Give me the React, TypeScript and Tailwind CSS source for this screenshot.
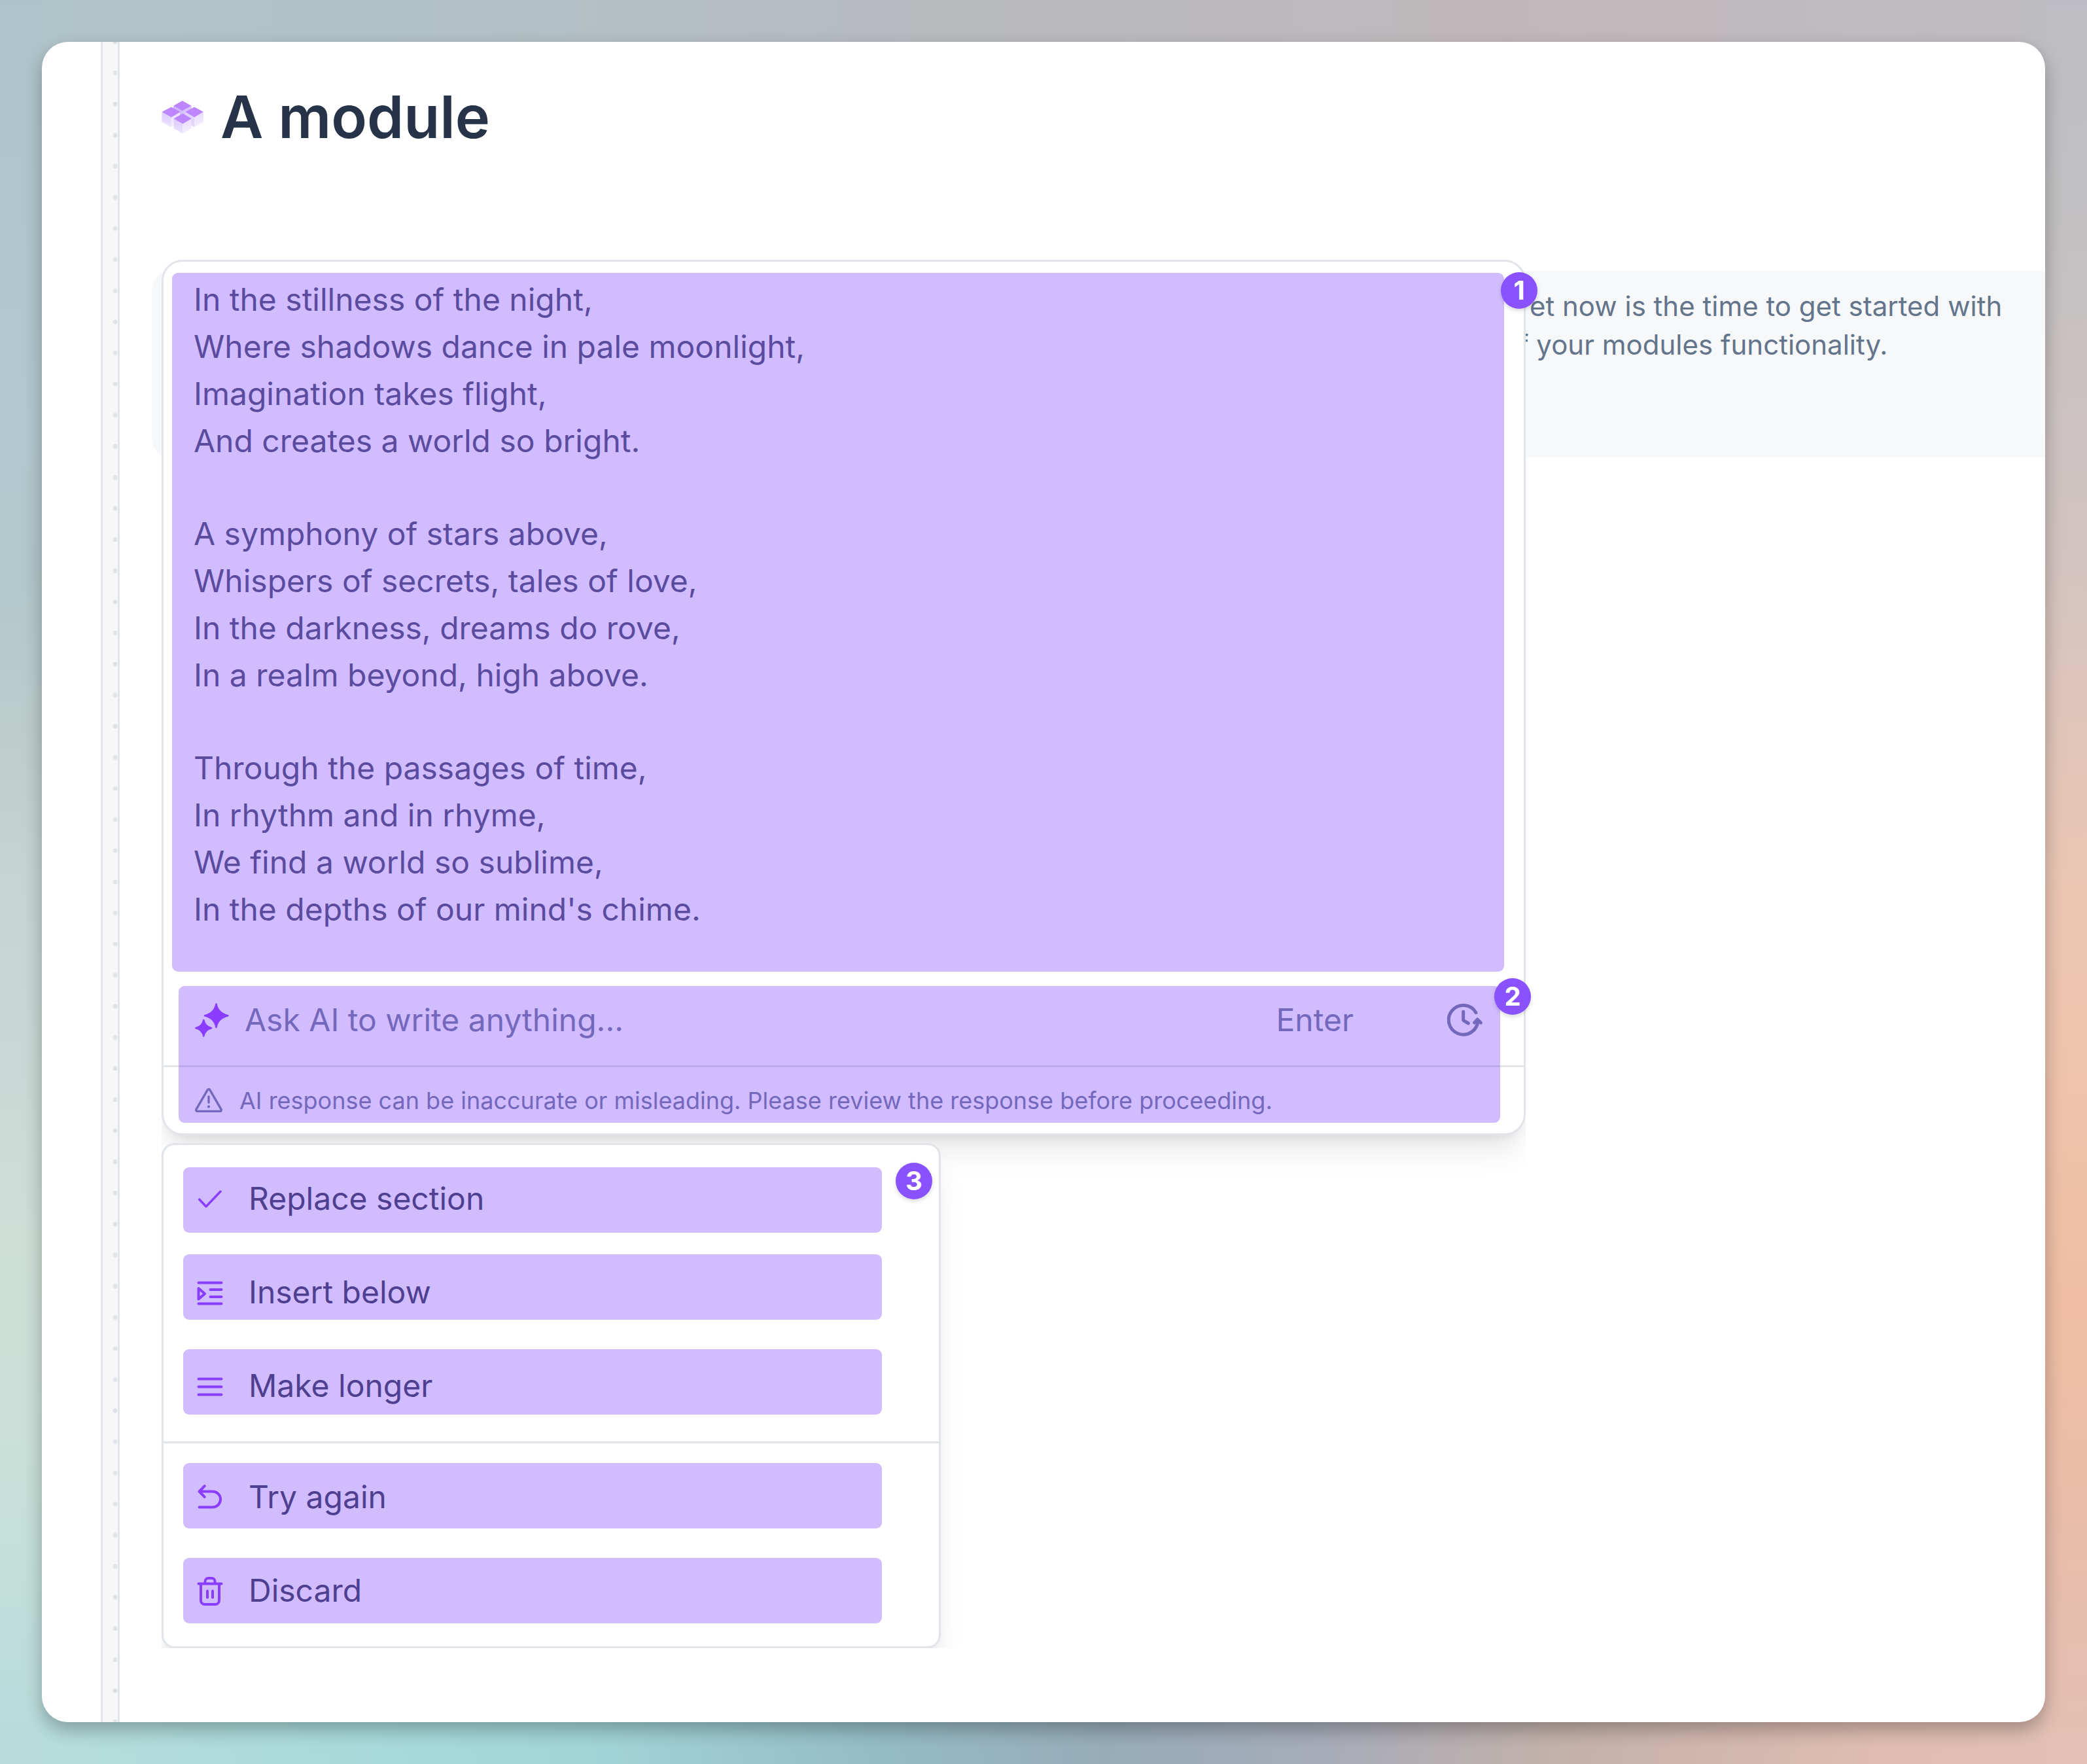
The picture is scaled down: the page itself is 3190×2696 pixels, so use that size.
import React from "react";

const stanzas: string[][] = [
  [
    "In the stillness of the night,",
    "Where shadows dance in pale moonlight,",
    "Imagination takes flight,",
    "And creates a world so bright.",
  ],
  [
    "A symphony of stars above,",
    "Whispers of secrets, tales of love,",
    "In the darkness, dreams do rove,",
    "In a realm beyond, high above.",
  ],
  [
    "Through the passages of time,",
    "In rhythm and in rhyme,",
    "We find a world so sublime,",
    "In the depths of our mind's chime.",
  ],
];

function ModuleIcon() {
  return (
    <svg className="h-[50px] w-16 shrink-0" viewBox="0 0 190 149" aria-hidden="true">
      <defs>
        <linearGradient id="faceLeft" x1="0" y1="0" x2="0" y2="1">
          <stop offset="0" stopColor="#dccbff" />
          <stop offset="1" stopColor="#ebe2ff" />
        </linearGradient>
        <linearGradient id="faceRight" x1="0" y1="0" x2="0" y2="1">
          <stop offset="0" stopColor="#e9dcff" />
          <stop offset="1" stopColor="#f5efff" />
        </linearGradient>
      </defs>
      <path d="M53 23 94 46v44L53 66Z" fill="#cdb9fb" />
      <path d="M136 23 94 46v44l42-24Z" fill="#d9c4ff" />
      <path d="M94 0l42 23-42 23-41-23Z" fill="#bd86ff" />
      <path d="M1 51l43 24v45L1 97Z" fill="url(#faceLeft)" />
      <path d="M84 51 44 75v45l40-22Z" fill="url(#faceRight)" />
      <path d="M44 28l40 23-40 24L1 51Z" fill="#bd86ff" />
      <path d="M108 51l41 24v45l-41-22Z" fill="#e3d4ff" />
      <path d="M190 51l-41 24v45l41-23Z" fill="url(#faceRight)" />
      <path d="M149 28l41 23-41 24-41-24Z" fill="#bd86ff" />
      <path d="M55 81l41 24v44l-41-24Z" fill="url(#faceLeft)" />
      <path d="M136 81 96 105v44l40-24Z" fill="url(#faceRight)" />
      <path d="M96 58l40 23-40 24-41-24Z" fill="#bd86ff" />
    </svg>
  );
}

function SparkleIcon() {
  return (
    <svg
      className="h-[52px] w-[52px] shrink-0 text-[#8b3dff]"
      viewBox="0 0 52 52"
      fill="currentColor"
      stroke="currentColor"
      strokeWidth="2.5"
      strokeLinejoin="round"
      aria-hidden="true"
    >
      <path d="M32.500 1.500C34 10 39.500 16.500 50.500 19.300 39.500 22 34 28 32.500 37 31 28 25.500 22 15 19.300 25.500 16.500 31 10 32.500 1.500Z" />
      <path d="M13.300 26C14.500 32.500 18 36.500 25 38.300 18 40 14.500 44 13.300 50.500 12 44 8.500 40 1.500 38.300 8.500 36.500 12 32.500 13.300 26Z" />
    </svg>
  );
}

function HistoryIcon() {
  return (
    <svg
      className="h-[50px] w-[54px]"
      viewBox="0 0 162 150"
      fill="none"
      stroke="currentColor"
      strokeWidth="15"
      strokeLinecap="round"
      strokeLinejoin="round"
      aria-hidden="true"
    >
      <path d="M132 41A67 67 0 1 0 141 76" />
      <path d="M125 87l14-15 15 15" />
      <path d="M74 37v39l23 14" />
    </svg>
  );
}

function WarningIcon() {
  return (
    <svg
      className="h-[37px] w-[42px] shrink-0"
      viewBox="0 0 42 37"
      fill="none"
      stroke="currentColor"
      strokeWidth="3.4"
      strokeLinecap="round"
      strokeLinejoin="round"
      aria-hidden="true"
    >
      <path d="M19.300 2.600 2 32.300a2 2 0 0 0 1.700 3.100h34.600a2 2 0 0 0 1.700-3.100L22.700 2.600a2 2 0 0 0-3.400 0Z" />
      <path d="M21 13v9" />
      <path d="M21 28.200v.2" strokeWidth="4" />
    </svg>
  );
}

function MenuIcon({ children }: { children: React.ReactNode }) {
  return (
    <svg
      className="relative h-11 w-11 shrink-0 overflow-visible text-[#8b3dff]"
      viewBox="0 0 44 44"
      fill="none"
      stroke="currentColor"
      strokeWidth="4"
      strokeLinecap="round"
      strokeLinejoin="round"
      aria-hidden="true"
    >
      {children}
    </svg>
  );
}

const badgeStyle =
  "flex h-14 w-14 items-center justify-center rounded-full bg-[#8a52ff] text-[40px] leading-none font-bold text-white shadow-[0_3px_6px_rgba(0,0,0,0.15)]";

type Item = { label: string; mark: string; icon: React.ReactNode };

const edits: Item[] = [
  {
    label: "Replace section",
    mark: "top-6",
    icon: <path d="M5.600 23 16 34 38 11" strokeWidth="3.500" />,
  },
  {
    label: "Insert below",
    mark: "top-3.5",
    icon: (
      <path d="M4.500 7.500h35M22.500 18h17M22.500 29h17M4.500 39.500h35M4.500 16v16.500l9.500-8.200Z" />
    ),
  },
  {
    label: "Make longer",
    mark: "top-4",
    icon: <path d="M4.500 11.500h35M4.500 23.500h35M4.500 35.500h35" />,
  },
];

const outcomes: Item[] = [
  {
    label: "Try again",
    mark: "top-5",
    icon: (
      <path d="M13.700 5.200 5.600 13.500l8.100 8.300M5.600 13.500H26a12 12 0 0 1 0 24H5.600" />
    ),
  },
  {
    label: "Discard",
    mark: "top-[22px]",
    icon: (
      <path d="M4.500 11.500h35M14.500 11.500V8a5 5 0 0 1 5-5h5a5 5 0 0 1 5 5v3.500M8 11.500V37a6 6 0 0 0 6 6h16a6 6 0 0 0 6-6V11.500M18 22.500v10M26 22.500v10" />
    ),
  },
];

function MenuGroup({ items }: { items: Item[] }) {
  return (
    <div className="pt-2.5 pb-3.5">
      {items.map((item) => (
        <button
          key={item.label}
          type="button"
          className="relative flex h-[143px] w-full items-center gap-[37px] pl-[49px] text-left text-[48px] leading-none text-[#4e3f90]"
        >
          <span
            className={`${item.mark} absolute right-[87px] left-[30px] h-[100px] rounded-[9px] bg-[#d1bcff]`}
          />
          <MenuIcon>{item.icon}</MenuIcon>
          <span className="relative">{item.label}</span>
        </button>
      ))}
    </div>
  );
}

export default function App() {
  return (
    <div className="flex min-h-screen bg-[linear-gradient(180deg,#afc4ca_0%,#b0c6cc_10%,#b3c8cf_25%,#b3c8cb_33%,#bccdcb_42%,#c5d5d3_50%,#cad9d5_62%,#cddfd7_70%,#cbe0d8_80%,#c4dfd9_88%,#b9dcdb_98%),linear-gradient(180deg,#bdbdc3_0%,#c2c0c2_12%,#cdc3c2_25%,#d2c3c1_31%,#dfc5ba_40%,#eac6b3_50%,#efc4ad_60%,#f0bda4_74%,#e9bdaa_86%,#e2c0b4_100%),linear-gradient(90deg,#b0c5ca_0%,#b1c2c7_20%,#b8babe_45%,#c0b8bb_75%,#bebdc3_100%),linear-gradient(90deg,#b9dcdb_0%,#a9dbdb_16%,#a1d5d8_28%,#95bcc6_42%,#97acb9_53%,#a6acb9_63%,#c4b1aa_75%,#dfbdb0_90%,#e2c0b4_100%)] bg-[length:64px_100%,64px_100%,100%_120px,100%_120px] bg-[position:left_top,right_top,left_top,left_bottom] bg-no-repeat p-16 font-['Inter',sans-serif]">
      <div className="flex flex-1 rounded-[40px] shadow-[0_12px_28px_rgba(0,0,0,0.28)]">
        <div className="flex flex-1 overflow-hidden rounded-[40px] bg-white">
          <div className="w-[90px] shrink-0" />
          <div className="flex w-[29px] shrink-0 justify-end border-x-[3px] border-[#e2e5ea] bg-[#f7f7f7]">
            <div className="w-2 bg-[radial-gradient(circle_at_50%_0,#dfe3e8_3px,transparent_4px),radial-gradient(circle_at_50%_100%,#dfe3e8_3px,transparent_4px)] bg-[length:8px_48px] [background-repeat:no-repeat_round]" />
          </div>

          <main className="min-w-0 flex-1 pt-[70px] pl-16">
            <header className="flex h-[90px] items-center gap-[26px]">
              <ModuleIcon />
              <h1 className="text-[90px] leading-none font-semibold text-[#263348]">A module</h1>
            </header>

            <section className="relative mt-[173px]">
              <div className="absolute top-[17px] right-0 -left-[15px] h-[285px] rounded-l-[28px] bg-[#f6f8fa] pt-6 pl-[2089px]">
                <p className="indent-[17px] text-[42px] leading-[59px] whitespace-nowrap text-[#64748b]">
                  et now is the time to get started with
                  <br />f your modules functionality.
                </p>
              </div>

              <div className="relative w-full max-w-[2085px]">
                <div className="overflow-hidden">
                  <div className="rounded-[32px] border-[3px] border-[#e1e5ea] bg-white pt-[17px] shadow-[0_30px_45px_-9px_rgba(0,0,0,0.1),0_12px_18px_-12px_rgba(0,0,0,0.1)]">
                    <article className="mr-[30px] ml-[13px] flex flex-col gap-[70px] rounded-[9px] bg-[#d1bcff] pt-[5px] pb-[59px] pl-[33px] text-[48px] leading-[72px] text-[#5a4b9f]">
                      {stanzas.map((lines) => (
                        <p key={lines[0]}>
                          {lines.map((line) => (
                            <span key={line} className="block">
                              {line}
                            </span>
                          ))}
                        </p>
                      ))}
                    </article>

                    <form className="relative mt-[22px]" onSubmit={(e) => e.preventDefault()}>
                      <div className="absolute top-0 right-9 left-[23px] h-[209px] rounded-[9px] bg-[#d1bcff]" />
                      <div className="relative flex h-[121px] items-start pr-[63px] pl-12 text-[#7468bd]">
                        <label className="flex h-[103px] flex-1 items-center gap-6">
                          <SparkleIcon />
                          <input
                            type="text"
                            aria-label="Ask AI"
                            placeholder="Ask AI to write anything..."
                            className="h-[72px] w-full bg-transparent text-[48px] outline-none placeholder:text-[#7468bd]"
                          />
                        </label>
                        <div className="flex h-[103px] items-center gap-[143px]">
                          <button type="submit" className="text-[48px] leading-none">
                            Enter
                          </button>
                          <button type="button" aria-label="History">
                            <HistoryIcon />
                          </button>
                        </div>
                      </div>
                      <div className="relative flex h-[104px] items-center gap-[26px] border-t-[3px] border-[#0f2f4a]/12 pl-12 text-[36px] leading-none text-[#7468bd]">
                        <WarningIcon />
                        <p>
                          AI response can be inaccurate or misleading. Please review the response
                          before proceeding.
                        </p>
                      </div>
                    </form>
                  </div>

                  <div className="relative mt-3 max-w-[1191px] rounded-[20px] border-[3px] border-[#e1e5ea] bg-white shadow-[0_30px_45px_-9px_rgba(0,0,0,0.1),0_12px_18px_-12px_rgba(0,0,0,0.1)]">
                    <MenuGroup items={edits} />
                    <div className="border-t-[3px] border-[#e1e5ea]" />
                    <MenuGroup items={outcomes} />
                    <span className={`${badgeStyle} absolute top-[27px] right-2.5`}>3</span>
                  </div>
                </div>

                <span className={`${badgeStyle} absolute top-[19px] -right-[18px]`}>1</span>
                <span className={`${badgeStyle} absolute top-[1098px] -right-2`}>2</span>
              </div>
            </section>
          </main>
        </div>
      </div>
    </div>
  );
}
